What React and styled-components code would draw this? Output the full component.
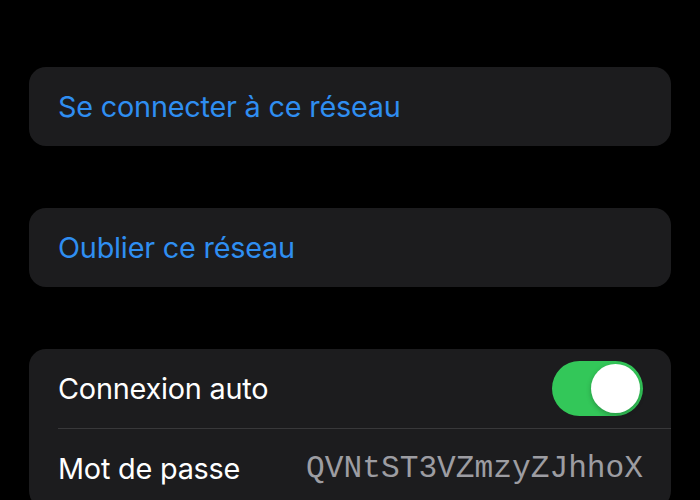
import React from "react";
import styled, { createGlobalStyle } from "styled-components";

const GlobalStyle = createGlobalStyle`
  html, body {
    margin: 0;
    padding: 0;
    background: #000;
  }
  body {
    font-family: Inter, "Noto Sans", "Liberation Sans", sans-serif;
    -webkit-font-smoothing: antialiased;
  }
`;

const Screen = styled.div`
  width: 700px;
  height: 500px;
  overflow: hidden;
  background: #000;
  box-sizing: border-box;
  padding: 67px 29px 0 29px;
  display: flex;
  flex-direction: column;
  gap: 62px;
`;

const Card = styled.div`
  background: #1c1c1e;
  border-radius: 17px;
  overflow: hidden;
  display: flex;
  flex-direction: column;
  flex-shrink: 0;
`;

const Row = styled.div`
  height: 79px;
  display: flex;
  align-items: center;
  justify-content: space-between;
  padding: 0 28px 0 29px;
  flex-shrink: 0;

  & + & {
    border-top: 1px solid #38383a;
    margin-left: 29px;
    padding-left: 0;
  }
`;

const ActionLabel = styled.span`
  color: #2f8ef1;
  font-size: 28.8px;
  letter-spacing: -0.2px;
`;

const Label = styled.span`
  color: #fff;
  font-size: 28.8px;
  letter-spacing: -0.2px;
`;

const Secret = styled.span`
  color: #9d9da2;
  font-family: "Liberation Mono", "DejaVu Sans Mono", monospace;
  font-size: 31.2px;
`;

const Track = styled.div`
  width: 91px;
  height: 55px;
  border-radius: 28px;
  background: ${(p) => (p.on ? "#33c759" : "#39393d")};
  display: flex;
  align-items: center;
  justify-content: ${(p) => (p.on ? "flex-end" : "flex-start")};
  padding: 0 3px;
  box-sizing: border-box;
`;

const Knob = styled.div`
  width: 49px;
  height: 49px;
  border-radius: 50%;
  background: #fff;
  box-shadow: 0 2px 5px rgba(0, 0, 0, 0.25);
`;

const Toggle = ({ on }) => (
  <Track on={on ? 1 : 0}>
    <Knob />
  </Track>
);

export default function App() {
  return (
    <>
      <GlobalStyle />
      <Screen>
        <Card>
          <Row>
            <ActionLabel>Se connecter à ce réseau</ActionLabel>
          </Row>
        </Card>
        <Card>
          <Row>
            <ActionLabel>Oublier ce réseau</ActionLabel>
          </Row>
        </Card>
        <Card>
          <Row>
            <Label>Connexion auto</Label>
            <Toggle on />
          </Row>
          <Row>
            <Label>Mot de passe</Label>
            <Secret>QVNtST3VZmzyZJhhoX</Secret>
          </Row>
        </Card>
      </Screen>
    </>
  );
}
